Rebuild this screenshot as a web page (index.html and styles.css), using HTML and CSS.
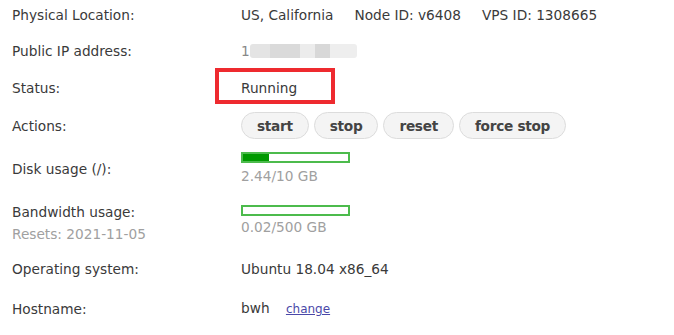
FILE: index.html
```html
<!DOCTYPE html>
<html lang="en">
<head>
    <meta charset="UTF-8">
    <title>VPS Main Controls</title>
    <link rel="stylesheet" href="styles.css">
</head>
<body>
    <div class="details">
        <div class="row row-location">
            <div class="label">Physical Location:</div>
            <div class="value">US, California<span class="sep">Node ID: v6408</span><span class="sep">VPS ID: 1308665</span></div>
        </div>
        <div class="row">
            <div class="label">Public IP address:</div>
            <div class="value"><span class="ip-first">1</span><span class="ip-blur"><i class="b1"></i><i class="b2"></i><i class="b3"></i><i class="b4"></i><i class="b5"></i></span></div>
        </div>
        <div class="row row-status">
            <div class="label">Status:</div>
            <div class="value"><span class="status highlight">Running</span></div>
        </div>
        <div class="row row-actions">
            <div class="label">Actions:</div>
            <div class="value actions">
                <button>start</button>
                <button>stop</button>
                <button>reset</button>
                <button>force stop</button>
            </div>
        </div>
        <div class="row row-usage">
            <div class="label">Disk usage (/):</div>
            <div class="value">
                <div class="bar"><div class="fill" style="width: 24.4%"></div></div>
                <div class="muted">2.44/10 GB</div>
            </div>
        </div>
        <div class="row row-bandwidth">
            <div class="label">Bandwidth usage:<div class="muted">Resets: 2021-11-05</div></div>
            <div class="value">
                <div class="bar"><div class="fill" style="width: 0.004%"></div></div>
                <div class="muted">0.02/500 GB</div>
            </div>
        </div>
        <div class="row row-os">
            <div class="label">Operating system:</div>
            <div class="value">Ubuntu 18.04 x86_64</div>
        </div>
        <div class="row row-host">
            <div class="label">Hostname:</div>
            <div class="value">bwh <a href="#" class="change">change</a></div>
        </div>
    </div>
</body>
</html>
```

FILE: styles.css
```css
body {
    margin: 0;
    background: #fff;
    font-family: "DejaVu Sans", Verdana, sans-serif;
    font-size: 13.7px;
    color: #3a3a3a;
}

.details {
    padding-left: 12px;
}

.row {
    display: grid;
    grid-template-columns: 229px 1fr;
    align-items: center;
    line-height: 18px;
    padding: 9px 0;
}

.row-location {
    padding: 6px 0 9px;
}

.row-status {
    padding: 10px 0;
}

.row-actions {
    padding: 5px 0;
}

.row-usage {
    padding: 8px 0 0;
}

.row-bandwidth {
    padding: 16px 0 6px;
    align-items: start;
    line-height: 22px;
}

.row-bandwidth .value {
    padding-top: 4px;
    line-height: 18px;
}

.row-os {
    padding: 9px 0 12px;
}

.sep {
    margin-left: 21px;
}

.ip-first {
    color: #888;
}

.ip-blur {
    display: inline-flex;
    vertical-align: middle;
    height: 14px;
    margin-top: -3px;
    border-radius: 3px;
    overflow: hidden;
}

.ip-blur i {
    display: block;
    height: 100%;
}

.b1 { width: 20px; background: #e4e4e4; }
.b2 { width: 30px; background: #dadada; }
.b3 { width: 15px; background: #ececec; }
.b4 { width: 15px; background: #d8d8d8; }
.b5 { width: 27px; background: #eeeeee; }

.status {
    position: relative;
}

.highlight::after {
    content: "";
    position: absolute;
    left: -26px;
    top: -12px;
    width: 112px;
    height: 28px;
    border: 4px solid #ee2a2f;
}

.actions {
    display: flex;
    gap: 5px;
}

.actions button {
    height: 27px;
    padding: 0 15px;
    border: 1px solid #dcdcdc;
    border-radius: 14px;
    background: #f4f4f4;
    font-family: inherit;
    font-size: 13.7px;
    font-weight: bold;
    letter-spacing: -0.3px;
    color: #444;
}

.bar {
    width: 105px;
    height: 7px;
    border: 2px solid #4cbb4c;
    background: #fff;
}

.fill {
    height: 100%;
    background: #009900;
}

.row-usage .bar {
    margin-bottom: 4px;
}

.row-bandwidth .bar {
    margin-bottom: 2px;
}

.muted {
    color: #a0a0a0;
}

.change {
    margin-left: 12px;
    font-size: 12px;
    color: #4a48a8;
}
```
